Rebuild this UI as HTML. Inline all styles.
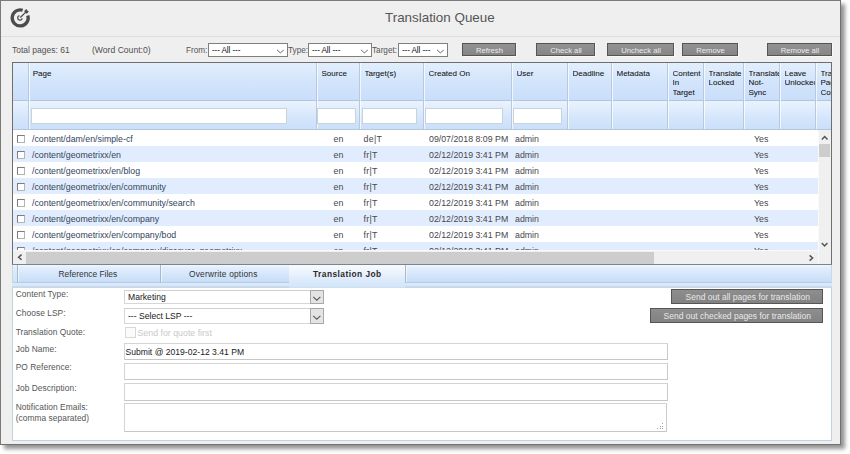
<!DOCTYPE html>
<html><head><meta charset="utf-8">
<style>
*{box-sizing:border-box;margin:0;padding:0}
html,body{width:850px;height:454px;overflow:hidden;background:#fff;font-family:"Liberation Sans",sans-serif}
.a{position:absolute}
.t{position:absolute;white-space:nowrap;line-height:1}
.sel{position:absolute;background:#fff;border:1px solid #7f7f7f;height:14px}
.sel span{position:absolute;left:3px;top:2.8px;font-size:8.2px;color:#111;line-height:1;letter-spacing:-0.12px}
.sel svg{position:absolute;right:2px;top:5px}
.btn{position:absolute;height:13px;border:1px solid #555;background:linear-gradient(#939393,#858585);color:#ededed;font-size:7.7px;text-align:center;line-height:14.4px;padding-left:1px;box-shadow:1px 1px 0 rgba(255,255,255,0.6)}
.col{position:absolute;top:63px;height:66px;width:1px;background:#b8c9dd}
.colh{position:absolute;top:63px;height:66px;width:1px;background:rgba(255,255,255,0.7)}
.inp{position:absolute;top:108px;height:16px;background:#fff;border:1px solid #c9d3de}
.ht{position:absolute;top:68.7px;font-size:8px;color:#111;-webkit-text-stroke:0.06px #111;line-height:9.6px;white-space:nowrap;overflow:hidden}
.row{position:absolute;left:0;width:805px;height:16px}
.cb{position:absolute;left:4px;top:5px;width:8px;height:8px;border:1px solid #b4b4b4;border-top-color:#7c7c7c;border-left-color:#7c7c7c;background:#fff}
.rt{position:absolute;top:5px;font-size:8.8px;color:#484848;line-height:1;white-space:nowrap}
.rp{color:#33455a}
.lbl{position:absolute;left:15.7px;font-size:8.4px;color:#555;line-height:1;white-space:nowrap;letter-spacing:0.05px}
.fi{position:absolute;left:124px;width:543px;background:#fff;border:1px solid #d4d4d4;border-bottom-color:#c6c6c6;border-right-color:#cacaca}
.gb{position:absolute;border:1px solid #555;background:linear-gradient(#8e8e8e,#828282);color:#e8e8e8;font-size:8.5px;text-align:center;line-height:15px;padding-left:1.5px}
</style></head><body>
<div class="a" style="left:0;top:0;width:841px;height:445px;background:#efefef;border-left:1px solid #7a7a7a;border-top:1px solid #7a7a7a;border-right:1px solid #707070;border-bottom:1px solid #707070;box-shadow:4px 4px 4px rgba(0,0,0,0.42)"></div>
<div class="a" style="left:1px;top:36px;width:839px;height:1px;background:#dedede"></div>
<svg class="a" style="left:0;top:0" width="40" height="40" viewBox="0 0 40 40">
  <path d="M27.81 15.43 A8 8 0 1 1 22.67 10.29" fill="none" stroke="#4b4b4b" stroke-width="3.3"/>
  <path d="M22.23 18.46 A2.3 2.3 0 1 1 19.48 15.66" fill="none" stroke="#4b4b4b" stroke-width="1.3"/>
  <line x1="20.3" y1="17.5" x2="26" y2="11.9" stroke="#4b4b4b" stroke-width="1.3"/>
  <path d="M24.2 11.0 L26.3 8.9 L27.3 10.6 L28.9 11.6 L26.8 13.7 L25.3 12.7 Z" fill="#4b4b4b"/>
</svg>
<div class="t" style="left:385px;top:11px;font-size:13.4px;color:#555">Translation Queue</div>
<div class="t" style="left:12px;top:46.3px;font-size:8.5px;color:#505050">Total pages: 61</div>
<div class="t" style="left:92px;top:46.3px;font-size:8.6px;color:#505050">(Word Count:0)</div>
<div class="t" style="left:186px;top:47px;font-size:8.2px;color:#555">From:</div>
<div class="sel" style="left:208px;top:43px;width:80px"><span>--- All ---</span><svg width="9" height="5"><path d="M1 0.8 L4.3 3.9 L7.8 1" fill="none" stroke="#606060" stroke-width="0.95"/></svg></div>
<div class="t" style="left:288px;top:47px;font-size:8.2px;color:#555">Type:</div>
<div class="sel" style="left:308px;top:43px;width:64px"><span>--- All ---</span><svg width="9" height="5"><path d="M1 0.8 L4.3 3.9 L7.8 1" fill="none" stroke="#606060" stroke-width="0.95"/></svg></div>
<div class="t" style="left:372px;top:47px;font-size:8.2px;color:#555">Target:</div>
<div class="sel" style="left:398px;top:43px;width:50px"><span>--- All ---</span><svg width="9" height="5"><path d="M1 0.8 L4.3 3.9 L7.8 1" fill="none" stroke="#606060" stroke-width="0.95"/></svg></div>
<div class="btn" style="left:462px;top:43px;width:54px">Refresh</div>
<div class="btn" style="left:536px;top:43px;width:59px">Check all</div>
<div class="btn" style="left:607px;top:43px;width:67px">Uncheck all</div>
<div class="btn" style="left:682px;top:43px;width:56px">Remove</div>
<div class="btn" style="left:767px;top:43px;width:65px">Remove all</div>
<div class="a" style="left:12px;top:62px;width:820px;height:203px;border:1px solid #6e6e6e;background:#fff"></div>
<div class="a" style="left:13px;top:63px;width:818px;height:37px;background:linear-gradient(#e2eefd,#d3e5fb 50%,#c9defa)"></div>
<div class="a" style="left:13px;top:100px;width:818px;height:1px;background:#b4c6dc"></div>
<div class="a" style="left:13px;top:101px;width:818px;height:28px;background:linear-gradient(#eaf3fe,#d8e8fc 50%,#cadffa)"></div>
<div class="a" style="left:13px;top:129px;width:818px;height:1px;background:#b4c6dc"></div>
<div class="col" style="left:28px"></div><div class="colh" style="left:29px"></div>
<div class="col" style="left:316px"></div><div class="colh" style="left:317px"></div>
<div class="col" style="left:359px"></div><div class="colh" style="left:360px"></div>
<div class="col" style="left:423px"></div><div class="colh" style="left:424px"></div>
<div class="col" style="left:511px"></div><div class="colh" style="left:512px"></div>
<div class="col" style="left:567px"></div><div class="colh" style="left:568px"></div>
<div class="col" style="left:611px"></div><div class="colh" style="left:612px"></div>
<div class="col" style="left:667px"></div><div class="colh" style="left:668px"></div>
<div class="col" style="left:703px"></div><div class="colh" style="left:704px"></div>
<div class="col" style="left:743px"></div><div class="colh" style="left:744px"></div>
<div class="col" style="left:779px"></div><div class="colh" style="left:780px"></div>
<div class="col" style="left:815px"></div><div class="colh" style="left:816px"></div>
<div class="ht" style="left:32.7px;width:283.3px">Page</div>
<div class="ht" style="left:321.5px;width:37.5px">Source</div>
<div class="ht" style="left:364.5px;width:58.5px">Target(s)</div>
<div class="ht" style="left:428.5px;width:82.5px">Created On</div>
<div class="ht" style="left:516.5px;width:50.5px">User</div>
<div class="ht" style="left:572.5px;width:38.5px">Deadline</div>
<div class="ht" style="left:616.5px;width:50.5px">Metadata</div>
<div class="ht" style="left:672.5px;width:30.5px">Content<br>In<br>Target</div>
<div class="ht" style="left:708.5px;width:34.5px">Translate<br>Locked</div>
<div class="ht" style="left:748.5px;width:30.5px">Translate<br>Not-<br>Sync</div>
<div class="ht" style="left:784.5px;width:30.5px">Leave<br>Unlocked</div>
<div class="ht" style="left:820.5px;width:10.5px">Translate<br>Page<br>Content</div>
<div class="inp" style="left:31px;width:256px"></div>
<div class="inp" style="left:317px;width:39px"></div>
<div class="inp" style="left:362px;width:55px"></div>
<div class="inp" style="left:425px;width:78px"></div>
<div class="inp" style="left:513px;width:49px"></div>
<div class="a" style="left:13px;top:130px;width:805px;height:120px;overflow:hidden">
<div class="row" style="top:0px;background:#fff"><div class="cb"></div><div class="rt rp" style="left:19px">/content/dam/en/simple-cf</div><div class="rt" style="left:320.5px">en</div><div class="rt" style="left:350.5px;letter-spacing:0.3px">de|T</div><div class="rt" style="left:416px">09/07/2018 8:09 PM</div><div class="rt" style="left:502px">admin</div><div class="rt" style="left:741px">Yes</div></div>
<div class="row" style="top:16px;background:#e1edfe"><div class="cb"></div><div class="rt rp" style="left:19px">/content/geometrixx/en</div><div class="rt" style="left:320.5px">en</div><div class="rt" style="left:350.5px;letter-spacing:0.3px">fr|T</div><div class="rt" style="left:416px">02/12/2019 3:41 PM</div><div class="rt" style="left:502px">admin</div><div class="rt" style="left:741px">Yes</div></div>
<div class="row" style="top:32px;background:#fff"><div class="cb"></div><div class="rt rp" style="left:19px">/content/geometrixx/en/blog</div><div class="rt" style="left:320.5px">en</div><div class="rt" style="left:350.5px;letter-spacing:0.3px">fr|T</div><div class="rt" style="left:416px">02/12/2019 3:41 PM</div><div class="rt" style="left:502px">admin</div><div class="rt" style="left:741px">Yes</div></div>
<div class="row" style="top:48px;background:#e1edfe"><div class="cb"></div><div class="rt rp" style="left:19px">/content/geometrixx/en/community</div><div class="rt" style="left:320.5px">en</div><div class="rt" style="left:350.5px;letter-spacing:0.3px">fr|T</div><div class="rt" style="left:416px">02/12/2019 3:41 PM</div><div class="rt" style="left:502px">admin</div><div class="rt" style="left:741px">Yes</div></div>
<div class="row" style="top:64px;background:#fff"><div class="cb"></div><div class="rt rp" style="left:19px">/content/geometrixx/en/community/search</div><div class="rt" style="left:320.5px">en</div><div class="rt" style="left:350.5px;letter-spacing:0.3px">fr|T</div><div class="rt" style="left:416px">02/12/2019 3:41 PM</div><div class="rt" style="left:502px">admin</div><div class="rt" style="left:741px">Yes</div></div>
<div class="row" style="top:80px;background:#e1edfe"><div class="cb"></div><div class="rt rp" style="left:19px">/content/geometrixx/en/company</div><div class="rt" style="left:320.5px">en</div><div class="rt" style="left:350.5px;letter-spacing:0.3px">fr|T</div><div class="rt" style="left:416px">02/12/2019 3:41 PM</div><div class="rt" style="left:502px">admin</div><div class="rt" style="left:741px">Yes</div></div>
<div class="row" style="top:96px;background:#fff"><div class="cb"></div><div class="rt rp" style="left:19px">/content/geometrixx/en/company/bod</div><div class="rt" style="left:320.5px">en</div><div class="rt" style="left:350.5px;letter-spacing:0.3px">fr|T</div><div class="rt" style="left:416px">02/12/2019 3:41 PM</div><div class="rt" style="left:502px">admin</div><div class="rt" style="left:741px">Yes</div></div>
<div class="row" style="top:112px;background:#e1edfe"><div class="cb"></div><div class="rt rp" style="left:19px">/content/geometrixx/en/company/discover_geometrixx</div><div class="rt" style="left:320.5px">en</div><div class="rt" style="left:350.5px;letter-spacing:0.3px">fr|T</div><div class="rt" style="left:416px">02/12/2019 3:41 PM</div><div class="rt" style="left:502px">admin</div><div class="rt" style="left:741px">Yes</div></div>
</div>
<div class="a" style="left:818px;top:130px;width:13px;height:134px;background:#f0f0f0;border-left:1px solid #fafafa"></div>
<div class="a" style="left:819px;top:144px;width:11px;height:13px;background:#cdcdcd"></div>
<div class="a" style="left:13px;top:250px;width:805px;height:14px;background:#f0f0f0;border-top:1px solid #fafafa"></div>
<div class="a" style="left:26px;top:252px;width:628px;height:12px;background:#cdcdcd"></div>
<svg class="a" style="left:0;top:0" width="850" height="454" viewBox="0 0 850 454">
<path d="M821.9 139.6 L824.7 136.6 L827.5 139.6" fill="none" stroke="#555" stroke-width="1.5" stroke-linejoin="miter"/>
<path d="M821.8 242.9 L824.6 245.9 L827.4 242.9" fill="none" stroke="#555" stroke-width="1.5" stroke-linejoin="miter"/>
<path d="M809.6 255.4 L812.6 258.0 L809.6 260.6" fill="none" stroke="#555" stroke-width="1.5" stroke-linejoin="miter"/>
<path d="M21.6 254.6 L18.6 257.2 L21.6 259.8" fill="none" stroke="#555" stroke-width="1.5" stroke-linejoin="miter"/>
</svg>
<div class="a" style="left:12px;top:264px;width:820px;height:1px;background:#77858f"></div>
<div class="a" style="left:12px;top:265px;width:820px;height:23px;background:linear-gradient(#f2f7fd,#e4edfb 8%,#d2e5fa 60%,#c6ddf8);border-left:1px solid #c9d8e8;border-right:1px solid #c9d8e8"></div>
<div class="a" style="left:12px;top:282px;width:820px;height:6px;background:linear-gradient(#bdd0e6 0,#bdd0e6 1px,#dceafb 1px,#d6e6f9 4px,#cddcec 4px,#c6d6e8 6px)"></div>
<div class="a" style="left:17px;top:265px;width:144px;height:18px;border-left:1px solid #a6b8cc;border-bottom:1px solid #b8cbe2;background:linear-gradient(#f4f8fd,#e6effc 10%,#d3e5fa 60%,#c7ddf8)"></div>
<div class="a" style="left:160px;top:265px;width:129px;height:18px;border-left:1px solid #a6b8cc;border-bottom:1px solid #b8cbe2;background:linear-gradient(#f4f8fd,#e6effc 10%,#d3e5fa 60%,#c7ddf8)"></div>
<div class="a" style="left:405px;top:265px;width:426px;height:18px;border-left:1px solid #a6b8cc;border-bottom:1px solid #b8cbe2;background:linear-gradient(#f4f8fd,#e6effc 10%,#d3e5fa 60%,#c7ddf8)"></div>
<div class="a" style="left:18px;top:265px;width:1px;height:17px;background:rgba(255,255,255,0.6)"></div>
<div class="a" style="left:161px;top:265px;width:1px;height:17px;background:rgba(255,255,255,0.6)"></div>
<div class="a" style="left:406px;top:265px;width:1px;height:17px;background:rgba(255,255,255,0.6)"></div>
<div class="a" style="left:289px;top:265px;width:116px;height:22px;background:linear-gradient(#f8fbfe,#eef4fd 30%,#dceafb 70%,#d2e5fa)"></div>
<div class="a" style="left:289px;top:287px;width:116px;height:1px;background:#cfdff0"></div>
<div class="t" style="left:58.5px;top:269.6px;font-size:8.4px;color:#333">Reference Files</div>
<div class="t" style="left:189px;top:269.6px;font-size:8.4px;color:#333;letter-spacing:0.2px">Overwrite options</div>
<div class="t" style="left:313px;top:269.6px;font-size:8.4px;font-weight:bold;color:#2a2a2a;letter-spacing:0.45px">Translation Job</div>
<div class="a" style="left:12px;top:288px;width:820px;height:153px;background:#fff;border:1px solid #c4d2e0;border-top:none"></div>
<div class="lbl" style="top:288.8px;line-height:10.4px">Content Type:</div>
<div class="lbl" style="top:308.4px;line-height:10.4px">Choose LSP:</div>
<div class="lbl" style="top:327px;line-height:10.4px">Translation Quote:</div>
<div class="lbl" style="top:344px;line-height:10.4px">Job Name:</div>
<div class="lbl" style="top:362.2px;line-height:10.4px">PO Reference:</div>
<div class="lbl" style="top:383.2px;line-height:10.4px">Job Description:</div>
<div class="lbl" style="top:402.2px;line-height:10.4px">Notification Emails:<br>(comma separated)</div>
<div class="a" style="left:124px;top:290px;width:200px;height:14px;border:1px solid #d6d6d6;border-top-color:#cfcfcf;background:#fff"><div class="t" style="left:3px;top:2.0px;font-size:8.6px;color:#1a1a1a">Marketing</div></div>
<div class="a" style="left:310px;top:290px;width:14px;height:14px;background:#e4e4e4;border:1px solid #a8a8a8"></div>
<svg class="a" style="left:312px;top:295.5px" width="10" height="5"><path d="M1.2 0.8 L4.8 4.2 L8.4 0.8" fill="none" stroke="#5a5a5a" stroke-width="1.1"/></svg>
<div class="a" style="left:124px;top:308px;width:200px;height:16px;border:1px solid #d6d6d6;border-top-color:#cfcfcf;background:#fff"><div class="t" style="left:3px;top:3.0px;font-size:8.6px;color:#1a1a1a">--- Select LSP ---</div></div>
<div class="a" style="left:310px;top:308px;width:14px;height:16px;background:#e4e4e4;border:1px solid #a8a8a8"></div>
<svg class="a" style="left:312px;top:314.5px" width="10" height="5"><path d="M1.2 0.8 L4.8 4.2 L8.4 0.8" fill="none" stroke="#5a5a5a" stroke-width="1.1"/></svg>
<div class="a" style="left:125px;top:327px;width:11px;height:11px;border:1px solid #d8d8d8;background:#fbfbfb"></div>
<div class="t" style="left:137.5px;top:329.4px;font-size:8.8px;color:#c9c9c9">Send for quote first</div>
<div class="fi" style="top:343px;height:17px;width:544px"></div>
<div class="fi" style="top:363px;height:17px;width:544px"></div>
<div class="fi" style="top:383px;height:18px;width:544px"></div>
<div class="fi" style="top:403px;height:29px;width:543px"></div>
<div class="a" style="left:662px;top:423px;width:1.2px;height:1.2px;background:#a4a4a4"></div>
<div class="a" style="left:659.5px;top:425.5px;width:1.2px;height:1.2px;background:#a4a4a4"></div>
<div class="a" style="left:662px;top:425.5px;width:1.2px;height:1.2px;background:#a4a4a4"></div>
<div class="a" style="left:657px;top:428px;width:1.2px;height:1.2px;background:#a4a4a4"></div>
<div class="a" style="left:659.5px;top:428px;width:1.2px;height:1.2px;background:#a4a4a4"></div>
<div class="a" style="left:662px;top:428px;width:1.2px;height:1.2px;background:#a4a4a4"></div>
<div class="t" style="left:125.5px;top:348px;font-size:8.6px;color:#1a1a1a">Submit @ 2019-02-12 3.41 PM</div>
<div class="gb" style="left:671px;top:289px;width:152px;height:15px">Send out all pages for translation</div>
<div class="gb" style="left:650px;top:308px;width:173px;height:15px">Send out checked pages for translation</div>
</body></html>
